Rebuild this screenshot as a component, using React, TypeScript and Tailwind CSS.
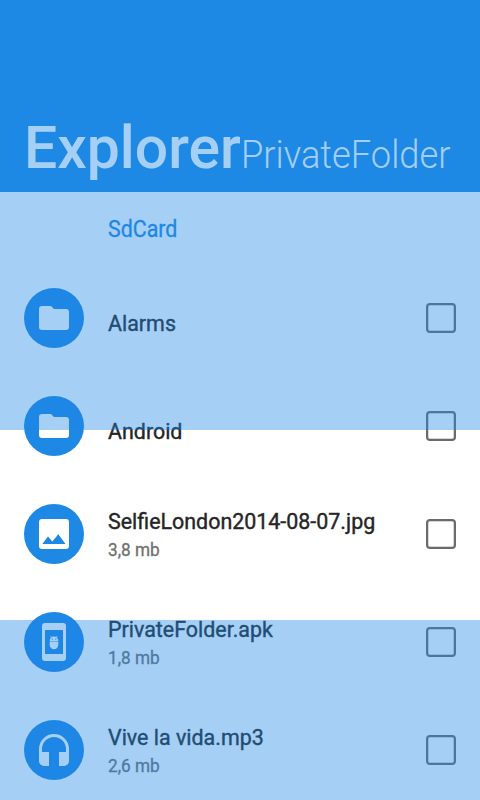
const files = [
  { name: "Alarms", kind: "folder", size: "" },
  { name: "Android", kind: "folder", size: "" },
  { name: "SelfieLondon2014-08-07.jpg", kind: "image", size: "3,8 mb" },
  { name: "PrivateFolder.apk", kind: "apk", size: "1,8 mb" },
  { name: "Vive la vida.mp3", kind: "music", size: "2,6 mb" },
];

function Icon({ kind }: { kind: string }) {
  return (
    <svg viewBox="0 0 60 60" className="size-[60px] shrink-0" fill="#fff">
      <circle cx="30" cy="30" r="30" fill="#1e88e5" />
      {kind === "folder" && <path d="M27 18h-9a3 3 0 0 0-3 3v18a3 3 0 0 0 3 3h24a3 3 0 0 0 3-3V24a3 3 0 0 0-3-3H30z" />}
      {kind === "image" && <path fillRule="evenodd" d="M45 42V18a3 3 0 0 0-3-3H18a3 3 0 0 0-3 3v24a3 3 0 0 0 3 3h24a3 3 0 0 0 3-3zM24 32.500l4.300 5L34.300 30.300 41.500 40H18.300z" />}
      {kind === "apk" && (
        <>
          <path fillRule="evenodd" d="M21 11h18a3 3 0 0 1 3 3v32a3 3 0 0 1-3 3H21a3 3 0 0 1-3-3V14a3 3 0 0 1 3-3zM21 18v24h18V18z" />
          <path d="M25.700 29v-.5a4.300 4 0 0 1 8.600 0v.5zM25.700 29.600h8.600v3.400a4.300 4.200 0 0 1-8.600 0z" />
          <path d="M26.600 24l1.500 1.800M33.400 24l-1.500 1.800" stroke="#fff" strokeWidth=".9" />
          <circle cx="28.200" cy="27.200" r=".6" fill="#1e88e5" />
          <circle cx="31.800" cy="27.200" r=".6" fill="#1e88e5" />
        </>
      )}
      {kind === "music" && <path fillRule="evenodd" d="M30 14a15 15 0 0 0-15 15v12a5 5 0 0 0 5 5h5V32h-7v-3a12 12 0 0 1 24 0v3h-7v14h5a5 5 0 0 0 5-5V29a15 15 0 0 0-15-15z" />}
    </svg>
  );
}

export default function App() {
  return (
    <main className="relative h-[800px] w-[480px] overflow-hidden bg-white font-[Roboto,sans-serif]">
      <header className="flex h-[192px] items-baseline bg-[#1e88e5] pl-[23.500px] pt-[103px] text-white/60">
        <span className="w-[217.500px] origin-left scale-x-[0.98] text-[60px] font-medium">Explorer</span>
        <span className="origin-left scale-x-[0.955] text-[38px] font-light">PrivateFolder</span>
      </header>
      <div className="h-[72px] pl-[108px] pt-[21px]">
        <div className="w-max origin-left scale-x-[0.93] text-[23px] leading-[34px] text-[#1e88e5] [-webkit-text-stroke:0.3px_#1e88e5]">SdCard</div>
      </div>
      {files.map((f) => (
        <div key={f.name} className="flex h-[108px] items-center px-6">
          <Icon kind={f.kind} />
          <div className={f.size ? "ml-6 flex-1" : "ml-6 flex-1 pt-[10px]"}>
            <div className="w-max origin-left scale-x-[0.952] text-[22.500px] leading-[30px] text-[#252525] [-webkit-text-stroke:0.4px_#252525]">{f.name}</div>
            {f.size && <div className="mt-px -mb-px w-max origin-left scale-x-[0.955] text-[18px] leading-[26px] text-[#707070] [-webkit-text-stroke:0.3px_#707070]">{f.size}</div>}
          </div>
          <div className="size-[30px] rounded-[4px] border-2 border-[#6b6b6b] shadow-[inset_0_0_0_0.5px_#b0b0b0]" />
        </div>
      ))}
      <div className="pointer-events-none absolute inset-x-0 top-[192px] h-[237.500px] bg-[#1e88e5]/40" />
      <div className="pointer-events-none absolute inset-x-0 top-[620px] h-[180px] bg-[#1e88e5]/40" />
    </main>
  );
}
